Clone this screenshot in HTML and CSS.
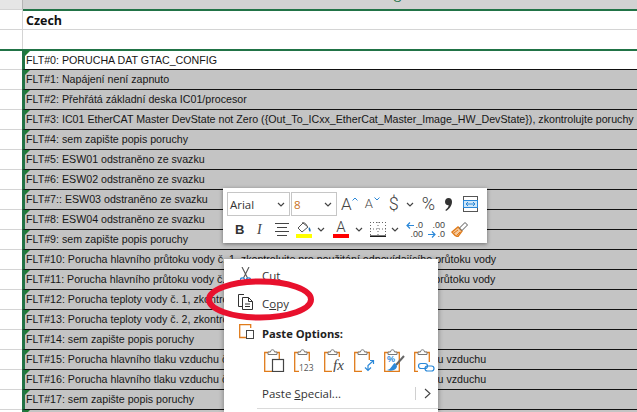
FILE: index.html
```html
<html lang="en">
<head>
  <meta charset="UTF-8">
  <title>Czech fault texts</title>
  <link rel="stylesheet" href="styles.css">
</head>
<body>

<div class="sheet">
  <div class="row head-row"><div class="num"></div><div class="cell col-head"><span>G</span></div></div>
  <div class="row"><div class="num"></div><div class="cell title">Czech</div></div>
  <div class="row"><div class="num"></div><div class="cell"></div></div>

  <div class="selection">
    <div class="row"><div class="num"></div><div class="cell flt">FLT#0: PORUCHA DAT GTAC_CONFIG</div></div>
    <div class="row"><div class="num"></div><div class="cell flt dark">FLT#1: Napájení není zapnuto</div></div>
    <div class="row"><div class="num"></div><div class="cell flt dark">FLT#2: Přehřátá základní deska IC01/procesor</div></div>
    <div class="row"><div class="num"></div><div class="cell flt dark">FLT#3: IC01 EtherCAT Master DevState not Zero ({Out_To_ICxx_EtherCat_Master_Image_HW_DevState}), zkontrolujte poruchy</div></div>
    <div class="row"><div class="num"></div><div class="cell flt dark">FLT#4: sem zapište popis poruchy</div></div>
    <div class="row"><div class="num"></div><div class="cell flt dark">FLT#5: ESW01 odstraněno ze svazku</div></div>
    <div class="row"><div class="num"></div><div class="cell flt dark">FLT#6: ESW02 odstraněno ze svazku</div></div>
    <div class="row"><div class="num"></div><div class="cell flt dark">FLT#7:: ESW03 odstraněno ze svazku</div></div>
    <div class="row"><div class="num"></div><div class="cell flt dark">FLT#8: ESW04 odstraněno ze svazku</div></div>
    <div class="row"><div class="num"></div><div class="cell flt dark">FLT#9: sem zapište popis poruchy</div></div>
    <div class="row"><div class="num"></div><div class="cell flt dark">FLT#10: Porucha hlavního průtoku vody č. 1, zkontrolujte pro použitání odpovídajícího průtoku vody</div></div>
    <div class="row"><div class="num"></div><div class="cell flt dark">FLT#11: Porucha hlavního průtoku vody č. 2, zkontrolujte pro použitání odpovídajícího průtoku vody</div></div>
    <div class="row"><div class="num"></div><div class="cell flt dark">FLT#12: Porucha teploty vody č. 1, zkontrolujte chlazení</div></div>
    <div class="row"><div class="num"></div><div class="cell flt dark">FLT#13: Porucha teploty vody č. 2, zkontrolujte chlazení</div></div>
    <div class="row"><div class="num"></div><div class="cell flt dark">FLT#14: sem zapište popis poruchy</div></div>
    <div class="row"><div class="num"></div><div class="cell flt dark">FLT#15: Porucha hlavního tlaku vzduchu č. 1, zkontrolujte použitání odpovídajícího tlaku vzduchu</div></div>
    <div class="row"><div class="num"></div><div class="cell flt dark">FLT#16: Porucha hlavního tlaku vzduchu č. 2, zkontrolujte použitání odpovídajícího tlaku vzduchu</div></div>
    <div class="row"><div class="num"></div><div class="cell flt dark">FLT#17: sem zapište popis poruchy</div></div>
    <div class="row"><div class="num"></div><div class="cell flt dark"></div></div>
  </div>
</div>

<!-- mini toolbar -->
<div class="mini">
  <div class="mini-row">
    <div class="combo font-combo"><span>Arial</span><svg class="chev" width="8" height="5" viewBox="0 0 8 5"><path d="M1 1l3 3 3-3" fill="none" stroke="#444" stroke-width="1.2"/></svg></div>
    <div class="combo size-combo"><span class="size-val">8</span><svg class="chev" width="8" height="5" viewBox="0 0 8 5"><path d="M1 1l3 3 3-3" fill="none" stroke="#444" stroke-width="1.2"/></svg></div>
    <span class="glyph grow-a">A</span><svg class="caret-up" width="6" height="4" viewBox="0 0 6 4"><path d="M.5 3.5L3 1l2.500 2.500" fill="none" stroke="#2b88d8" stroke-width="1"/></svg>
    <span class="glyph shrink-a">A</span><svg class="caret-down" width="6" height="4" viewBox="0 0 6 4"><path d="M.5.5L3 3 5.500.5" fill="none" stroke="#2b88d8" stroke-width="1"/></svg>
    <span class="glyph dollar">$</span>
    <svg class="chev-lone after-dollar" width="8" height="5" viewBox="0 0 8 5"><path d="M1 1l3 3 3-3" fill="none" stroke="#444" stroke-width="1.2"/></svg>
    <span class="glyph percent">%</span>
    <svg class="comma" width="7" height="13" viewBox="0 0 7 13"><path d="M3.500 0C5.800 0 7 1.600 7 3.800 7 7.500 4.500 11 1 13L.4 12C2.400 10.500 3.500 9 3.700 7.300 1.500 7.500 0 5.800 0 3.700 0 1.500 1.500 0 3.500 0z" fill="#333"/></svg>
    <svg class="merge" width="15" height="16" viewBox="0 0 15 16"><rect x=".5" y=".5" width="14" height="15" fill="#fff" stroke="#555"/><rect x=".5" y="4.500" width="14" height="7" fill="#cfe6f7" stroke="#2b88d8"/><path d="M3 8h9M5 6L3 8l2 2M10 6l2 2-2 2" fill="none" stroke="#2b88d8"/></svg>
  </div>
  <div class="mini-row second">
    <span class="btn-b">B</span>
    <span class="btn-i">I</span>
    <svg class="align" width="15" height="13" viewBox="0 0 15 13"><path d="M0 .5h14M2 4.500h10M0 8.500h14M2 12.500h10" stroke="#444"/></svg>
    <div class="swatch-btn">
      <svg width="16" height="12" viewBox="0 0 16 12"><path d="M7 1L2 6l4 4 6-5z" fill="#fff" stroke="#555"/><path d="M6 1c1-1 4 0 5 3" fill="none" stroke="#555"/><path d="M13 5c2 2 2 4 1 5-1-1-2-3-1-5z" fill="#1f6fb5"/></svg>
      <i class="bar yellow"></i>
    </div>
    <svg class="chev-lone after-fill" width="8" height="5" viewBox="0 0 8 5"><path d="M1 1l3 3 3-3" fill="none" stroke="#444" stroke-width="1.2"/></svg>
    <div class="swatch-btn font-color">
      <span class="color-a">A</span>
      <i class="bar red"></i>
    </div>
    <svg class="chev-lone after-color" width="8" height="5" viewBox="0 0 8 5"><path d="M1 1l3 3 3-3" fill="none" stroke="#444" stroke-width="1.2"/></svg>
    <svg class="borders" width="16" height="15" viewBox="0 0 16 15"><path d="M.5 0v14M15.500 0v14M8 0v14M0 .5h16M0 7h16" stroke="#666" stroke-dasharray="1 2" fill="none"/><path d="M0 14.200h16" stroke="#111" stroke-width="1.500"/></svg>
    <svg class="chev-lone after-borders" width="8" height="5" viewBox="0 0 8 5"><path d="M1 1l3 3 3-3" fill="none" stroke="#444" stroke-width="1.2"/></svg>
    <div class="decimals dec-first">
      <svg class="dec-arrow" width="8" height="7" viewBox="0 0 8 7"><path d="M8 3.500H1M4 .5l-3 3 3 3" fill="none" stroke="#2b88d8" stroke-width="1.200"/></svg>
      <span class="dec-a">.0</span>
      <span class="dec-b">.00</span>
    </div>
    <div class="decimals dec-second">
      <span class="dec-c">.00</span>
      <svg class="dec-arrow" width="8" height="7" viewBox="0 0 8 7"><path d="M0 3.500h7M4 .5l3 3-3 3" fill="none" stroke="#2b88d8" stroke-width="1.200"/></svg>
      <span class="dec-a">.0</span>
    </div>
    <svg class="painter" width="17" height="15" viewBox="0 0 17 15"><path d="M1 10l6-5 4 4-4 5.500c-3 0-4.500-2.500-6-4.500z" fill="#f7c99b" stroke="#e07b1a" stroke-width="1.400"/><path d="M3 11l4-3M6 13l3-3" stroke="#e07b1a"/><path d="M8.500 6l5.500-5.500 2.500 2.500-5.500 5.500z" fill="#fff" stroke="#555"/></svg>
  </div>
</div>

<!-- context menu -->
<div class="menu">
  <div class="item cut-item">
    <svg class="item-icon" width="11" height="16" viewBox="0 0 11 16"><path d="M2 0l5.500 11M9 0L3.500 11" fill="none" stroke="#555" stroke-width="1.100"/><circle cx="2.500" cy="13" r="2.200" fill="none" stroke="#2b88d8" stroke-width="1.200"/><circle cx="8.500" cy="13" r="2.200" fill="none" stroke="#2b88d8" stroke-width="1.200"/></svg>
    <span><u>C</u>ut</span>
  </div>
  <div class="item copy-item">
    <svg class="item-icon" width="17" height="16" viewBox="0 0 17 16"><path d="M7 .5H1.500v12H5" fill="none" stroke="#333"/><path d="M5.500 3.500h6l4 4v8h-10z" fill="#fff" stroke="#333"/><path d="M11.500 3.500v4h4M8 10h5M8 12.500h5" fill="none" stroke="#333"/></svg>
    <span>C<u>o</u>py</span>
  </div>
  <div class="item paste-head">
    <svg class="item-icon" width="15" height="15" viewBox="0 0 15 15"><path d="M7 13.500H.7V.7h11V4" fill="none" stroke="#e07b1a" stroke-width="1.300"/><rect x="7.500" y="6.500" width="7" height="8" fill="#fff" stroke="#444"/></svg>
    <b>Paste Options:</b>
  </div>
  <div class="paste-icons">
    <svg width="21" height="23" viewBox="0 0 21 23"><use href="#board"/><rect x="8.500" y="10.500" width="11" height="12" fill="#fff" stroke="#444" stroke-width="1.200"/></svg>
    <svg width="21" height="23" viewBox="0 0 21 23"><use href="#board"/><rect x="5" y="12" width="16" height="11" fill="#fff"/><text x="5" y="22" class="paste-123">123</text></svg>
    <svg width="21" height="23" viewBox="0 0 21 23"><use href="#board"/><rect x="8" y="8" width="13" height="15" fill="#fff"/><text x="9" y="21" class="paste-fx">fx</text></svg>
    <svg width="21" height="23" viewBox="0 0 21 23"><use href="#board"/><rect x="8" y="11" width="13" height="12" fill="#fff"/><path d="M19 12l-5 4.500v5M11 18.500l3 3 3-3M16 11.500h3.500V15" fill="none" stroke="#2b88d8" stroke-width="1.200"/></svg>
    <svg width="21" height="23" viewBox="0 0 21 23"><use href="#board"/><text x="3" y="13" class="paste-pct">%</text><path d="M20 7l-8 9" stroke="#666" stroke-width="2"/><path d="M11 14c-3 1-3 6-8 7 6 2 10-1 10-4z" fill="#2b88d8"/></svg>
    <svg width="21" height="23" viewBox="0 0 21 23"><use href="#board"/><rect x="4" y="13" width="17" height="10" fill="#fff"/><rect x="4.500" y="14.500" width="9" height="5" rx="2.500" fill="none" stroke="#2b88d8" stroke-width="1.200"/><rect x="11" y="17" width="9" height="5" rx="2.500" fill="none" stroke="#2b88d8" stroke-width="1.200"/></svg>
  </div>
  <div class="item special-item">
    <span>Paste <u>S</u>pecial...</span>
    <span class="divider"></span>
    <svg width="7" height="11" viewBox="0 0 7 11"><path d="M1 1l5 4.500L1 10" fill="none" stroke="#444" stroke-width="1.100"/></svg>
  </div>
  <div class="menu-sep"></div>
</div>

<svg width="0" height="0" class="defs">
  <symbol id="board" viewBox="0 0 21 23" width="21" height="23">
    <path d="M.7 3.500h14.600v18.800H.7z" fill="#fff" stroke="#e07b1a" stroke-width="1.300"/>
    <path d="M4 5.500V3h2.500c0-3 4-3 4 0H13v2.500z" fill="#fff" stroke="#777"/>
  </symbol>
</svg>

<!-- red ring drawn on the screenshot -->
<svg class="ring" width="112" height="47" viewBox="0 0 112 47"><ellipse cx="56" cy="23.500" rx="51" ry="18" fill="none" stroke="#e8112d" stroke-width="6"/></svg>

</body>
</html>
```
FILE: styles.css
```css
html, body {
  margin: 0;
  padding: 0;
  width: 637px;
  height: 412px;
  overflow: hidden;
  background: white;
  font-family: "Liberation Sans", Arial, sans-serif;
}

.sheet {
  height: 412px;
  overflow: hidden;
}

.row {
  display: flex;
  height: 20px;
}

.head-row {
  height: 10px;
}

.num {
  flex: none;
  border-right: 1px solid #d4d4d4;
  border-bottom: 1px solid #d4d4d4;
  box-sizing: border-box;
  width: 23px;
}

.head-row .num {
  background: #e6e6e6;
  border-right-color: #b4b4b4;
}

.cell {
  flex: 1;
  min-width: 0;
  box-sizing: border-box;
  border-bottom: 1px solid #d4d4d4;
  padding-left: 3px;
  white-space: nowrap;
  overflow: hidden;
  font-size: 10.67px;
  line-height: 19px;
  color: #161616;
}

.col-head {
  background: #d2d2d2;
  border-bottom: 2px solid #217346;
  margin-bottom: -1px;
  height: 11px;
  position: relative;
}

.col-head span {
  position: absolute;
  left: 370px;
  top: -8px;
  font-size: 11px;
  line-height: 12px;
  color: #217346;
}

.title {
  font-family: "Open Sans", sans-serif;
  font-weight: 700;
  font-size: 12.5px;
  line-height: 21px;
  color: #111;
}

.selection {
  border-top: 2px solid #217346;
  margin-top: -1px;
  position: relative;
}

.selection .row:first-child {
  height: 19px;
}

.selection .num {
  width: 22px;
  border-right: none;
}

.selection .cell {
  border-left: 3px solid #217346;
  position: relative;
  padding-left: 1px;
  border-bottom: 1px solid #111;
}

.selection .cell.dark {
  background: #c4c4c4;
}

.flt::before {
  content: "";
  position: absolute;
  left: 0;
  top: 0;
  border-top: 5px solid #1e7b34;
  border-right: 5px solid transparent;
}

.mini {
  position: absolute;
  left: 223px;
  top: 188px;
  width: 264px;
  height: 55px;
  box-sizing: border-box;
  background: white;
  box-shadow: 0 1px 4px rgba(0,0,0,0.45);
  padding: 4px 0 0 4px;
}

.mini-row {
  display: flex;
  align-items: center;
  height: 24px;
  color: #444;
}

.mini-row > * {
  flex: none;
}

.second {
  margin-top: 3px;
  height: 21px;
}

.combo {
  box-sizing: border-box;
  height: 24px;
  border: 1px solid #c6c6c6;
  display: flex;
  align-items: center;
  justify-content: space-between;
  padding: 0 4px 0 2px;
  font-family: "Open Sans", sans-serif;
  font-size: 11.5px;
  color: #333;
}

.font-combo { width: 63px; }
.size-combo { width: 46px; margin-left: 1px; }
.size-val { color: #c8701a; }

.glyph {
  font-family: Roboto, sans-serif;
  font-weight: 300;
  color: #444;
  line-height: 24px;
}

.grow-a { font-size: 17px; margin-left: 4px; }
.caret-up { margin: -10px 0 0 0; }
.shrink-a { font-size: 13px; margin-left: 7px; }
.caret-down { margin: -10px 0 0 1px; }
.dollar { font-size: 18px; margin-left: 9px; }
.chev-lone { flex: none; }
.after-dollar { margin-left: 7px; }
.percent { font-size: 18px; margin-left: 8px; }
.comma { margin-left: 10px; }
.merge { margin-left: 11px; }

.btn-b { font-weight: 700; font-size: 13px; margin-left: 8px; width: 10px; color: #333; }
.btn-i { font-family: "Liberation Serif", serif; font-style: italic; font-size: 14px; margin-left: 12px; width: 6px; }
.align { margin-left: 12px; }

.swatch-btn {
  width: 16px;
  height: 17px;
  margin-left: 6px;
  display: flex;
  flex-direction: column;
  align-items: center;
  justify-content: flex-end;
}

.bar {
  display: block;
  height: 4px;
  width: 16px;
  flex: none;
}

.yellow { background: #ffff00; }
.red { background: #ff0000; }

.after-fill { margin-left: 5px; }
.font-color { margin-left: 8px; }
.after-color { margin-left: 6px; }
.after-borders { margin-left: 5px; }
.color-a { font-family: Roboto, sans-serif; font-weight: 300; font-size: 15px; line-height: 13px; }

.borders { margin-left: 7px; }

.decimals {
  position: relative;
  width: 17px;
  height: 20px;
  font-family: "Liberation Sans", sans-serif;
  font-size: 9px;
  line-height: 9px;
  color: #444;
  display: flex;
  flex-wrap: wrap;
  align-content: center;
  align-items: center;
  justify-content: flex-end;
  gap: 0 1px;
}

.dec-first { margin-left: 7px; }
.dec-second { margin-left: 5px; }
.dec-b, .dec-c { width: 100%; text-align: right; }

.painter { margin-left: 6px; }

.menu {
  position: absolute;
  left: 224px;
  top: 259px;
  width: 214px;
  height: 153px;
  box-sizing: border-box;
  background: white;
  box-shadow: 0 1px 5px rgba(0,0,0,0.4);
  padding-top: 2px;
  font-family: "Open Sans", sans-serif;
  font-size: 11.5px;
  color: #333;
}

.item {
  display: flex;
  align-items: center;
  position: relative;
  height: 28px;
  padding-left: 38px;
}

.item-icon {
  position: absolute;
}

.cut-item .item-icon { left: 16px; top: 6px; }
.copy-item .item-icon { left: 13px; top: 5px; }
.paste-head .item-icon { left: 15px; top: 7px; }

.paste-head {
  height: 30px;
  padding-top: 2px;
  box-sizing: border-box;
}

.paste-head b {
  color: #222;
  font-size: 11.2px;
}

.paste-icons {
  display: flex;
  gap: 9px;
  padding-left: 40px;
  height: 24px;
  margin-top: 2px;
}

.special-item {
  height: 24px;
  margin-top: 8px;
}

.divider {
  width: 1px;
  height: 13px;
  background: #d0d0d0;
  margin: 0 8px 0 74px;
}

.menu-sep {
  height: 1px;
  background: #dadada;
  margin: 3px 0 0 33px;
}

.defs {
  position: absolute;
}

.paste-123 { font-family: "Open Sans", sans-serif; font-size: 8.5px; fill: #555; }
.paste-fx { font-family: "Liberation Serif", serif; font-style: italic; font-size: 15px; fill: #444; }
.paste-pct { font-family: "Liberation Sans", sans-serif; font-weight: 700; font-size: 9px; fill: #2b88d8; }

.ring {
  position: absolute;
  left: 204px;
  top: 276px;
}
```
